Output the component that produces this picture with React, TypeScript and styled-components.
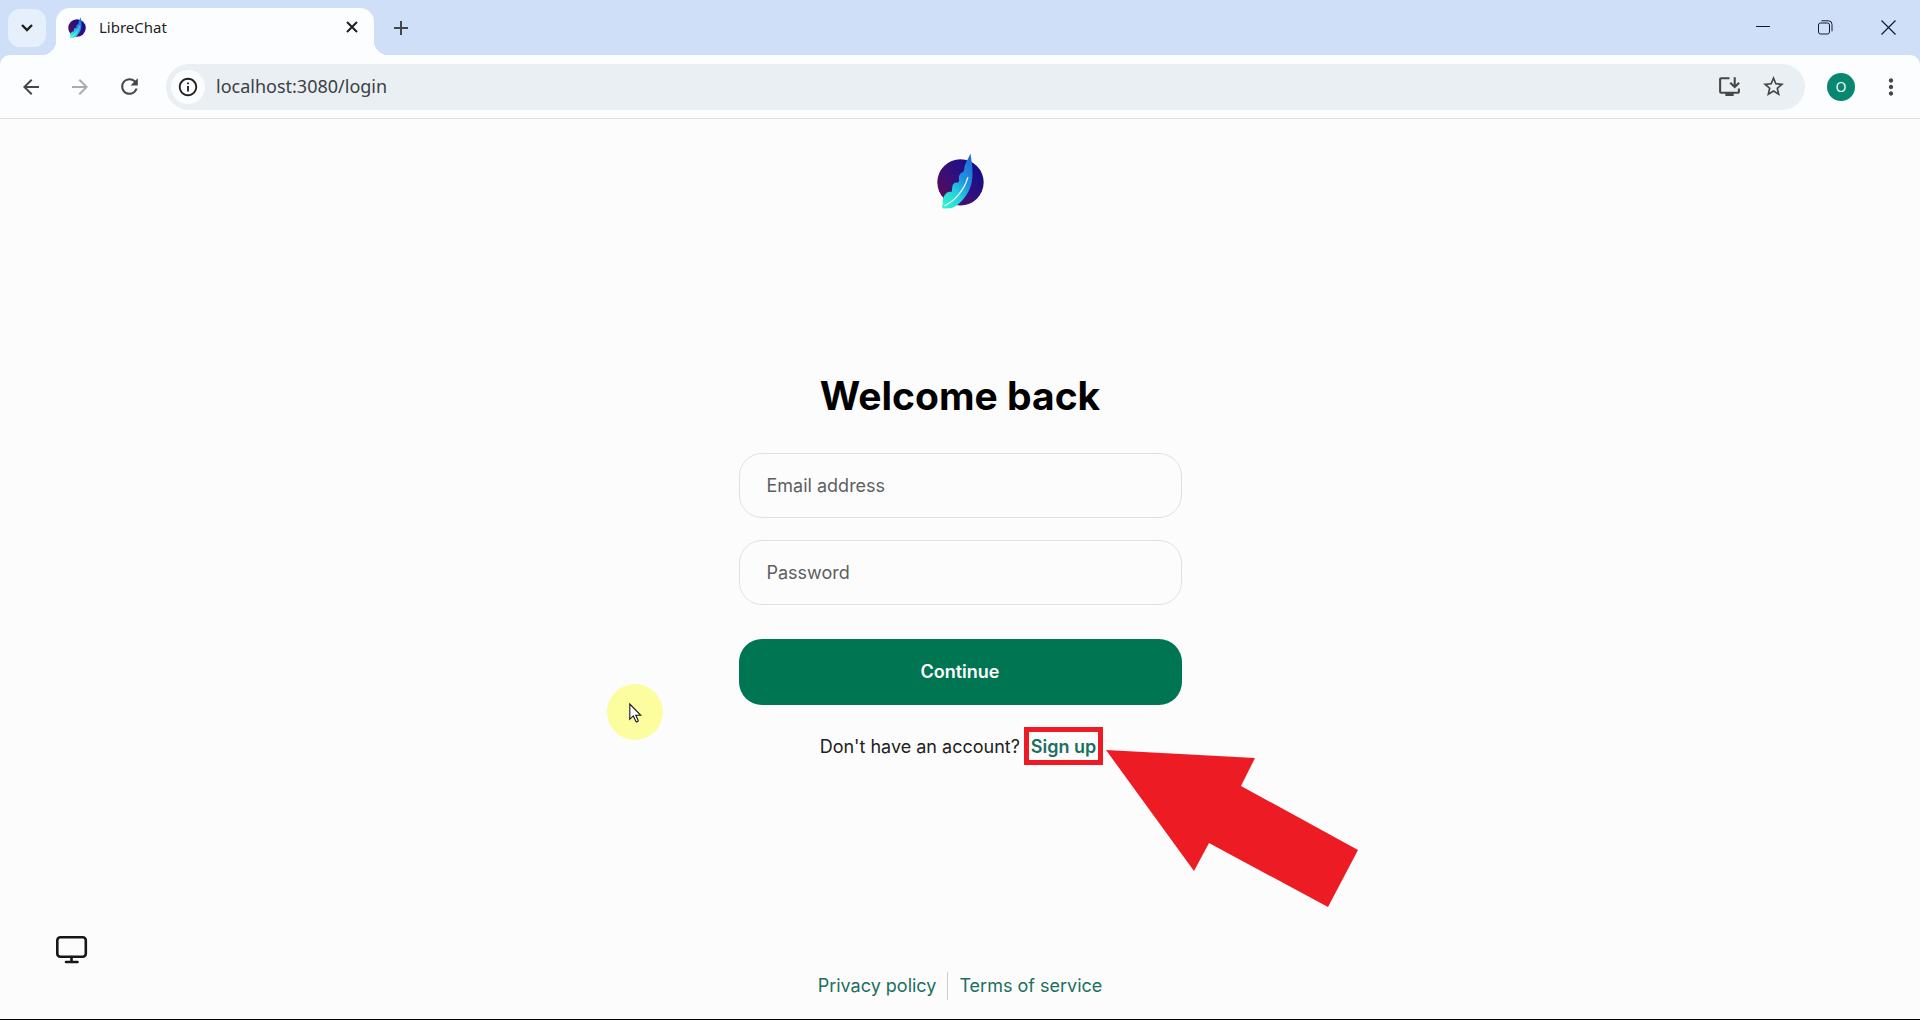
import React from "react";
import styled, { createGlobalStyle } from "styled-components";
import {
  MdAdd,
  MdArrowBack,
  MdArrowForward,
  MdInfoOutline,
  MdInstallDesktop,
  MdMoreVert,
  MdRefresh,
  MdStarBorder,
} from "react-icons/md";

const GlobalStyle = createGlobalStyle`
  *, *::before, *::after { box-sizing: border-box; }
  body { margin: 0; background: #fcfcfc; font-family: Inter, sans-serif; }
  button { font: inherit; border: 0; padding: 0; background: none; color: inherit; cursor: pointer; }
  a { text-decoration: none; }
  svg { display: block; flex: none; }
`;

const Window = styled.div`
  display: flex;
  flex-direction: column;
  min-height: 100vh;
  border-bottom: 1px solid #000;
`;

const TabStrip = styled.header`
  display: flex;
  align-items: flex-end;
  height: 55px;
  padding-left: 8px;
  background: #d0dff8;
  color: #1f1f1f;
  font-family: "Noto Sans", "Open Sans", sans-serif;
`;

const IconButton = styled.button<{ $size: number; $tone?: string }>`
  display: flex;
  align-items: center;
  justify-content: center;
  flex: none;
  width: ${(p) => p.$size}px;
  height: ${(p) => p.$size}px;
  border-radius: 50%;
  color: ${(p) => p.$tone ?? "#474747"};
`;

const TabSearch = styled(IconButton)`
  align-self: center;
  border-radius: 12px;
  background: #e6effc;
`;

const Tab = styled.div`
  position: relative;
  display: flex;
  align-items: center;
  width: 318px;
  height: 47px;
  margin-left: 10px;
  padding: 0 12px 9px;
  gap: 13px;
  border-radius: 14px 14px 0 0;
  background: #fcfdfe;
  font-size: 15px;

  &::before,
  &::after {
    content: "";
    position: absolute;
    bottom: 0;
    width: 14px;
    height: 14px;
  }
  &::before {
    right: 100%;
    background: radial-gradient(circle at 0 0, transparent 14px, #fcfdfe 14px);
  }
  &::after {
    left: 100%;
    background: radial-gradient(circle at 100% 0, transparent 14px, #fcfdfe 14px);
  }
`;

const TabTitle = styled.span`
  flex: 1;
`;

const NewTab = styled(IconButton)`
  align-self: center;
  margin-left: 10px;
`;

const WindowControls = styled.div`
  display: flex;
  align-self: stretch;
  margin-left: auto;
`;

const WindowButton = styled.button`
  display: flex;
  align-items: center;
  justify-content: center;
  width: 63px;
  height: 54px;
  color: #14182c;
`;

const ToolbarBack = styled.div`
  background: #d0dff8;
`;

const Toolbar = styled.nav`
  display: flex;
  align-items: center;
  height: 64px;
  padding: 0 12px;
  border-bottom: 1px solid #dfe1e3;
  border-radius: 10px 10px 0 0;
  background: #fcfdfe;
`;

const NavButtons = styled.div`
  display: flex;
  gap: 11px;
  margin-right: 18px;
`;

const AddressBar = styled.div`
  display: flex;
  align-items: center;
  flex: 1;
  height: 46px;
  padding: 0 10px 0 5px;
  border-radius: 23px;
  background: #e9eff3;
`;

const SiteInfo = styled(IconButton)`
  background: #fcfdfe;
`;

const AddressInput = styled.input`
  flex: 1;
  min-width: 0;
  margin: 0 11px;
  padding: 0 0 2px;
  border: 0;
  outline: 0;
  background: none;
  color: #3c4043;
  font: 18px "Noto Sans", "Open Sans", sans-serif;
`;

const Avatar = styled.button`
  width: 28px;
  height: 28px;
  margin: 0 19px 0 22px;
  border-radius: 50%;
  background: #07876f;
  color: #fff;
  font: 14px/28px "Open Sans", sans-serif;
`;

const Page = styled.div`
  position: relative;
  display: flex;
  flex: 1;
  flex-direction: column;
  align-items: center;
`;

const Brand = styled.div`
  padding-top: 34px;
`;

const Main = styled.main`
  position: relative;
  width: 443px;
  max-width: 100%;
  margin: auto 0;
`;

const Title = styled.h1`
  margin: 0 0 33px;
  color: #000;
  font-size: 39px;
  font-weight: 700;
  line-height: 48px;
  text-align: center;
`;

const Form = styled.form`
  display: flex;
  flex-direction: column;
  gap: 22px;
`;

const Field = styled.div`
  position: relative;
`;

const FieldInput = styled.input`
  display: block;
  width: 100%;
  height: 65px;
  padding: 0 27px;
  border: 1px solid #dfe1e1;
  border-radius: 23px;
  outline: 0;
  background: transparent;
  font: 18px Inter, sans-serif;
`;

const FieldLabel = styled.label`
  position: absolute;
  inset: 0 auto 0 28px;
  color: #5c5f5f;
  font-size: 18px;
  line-height: 65px;
  pointer-events: none;

  ${FieldInput}:focus + &,
  ${FieldInput}:not(:placeholder-shown) + & {
    font-size: 14px;
    line-height: 24px;
  }
`;

const Submit = styled.button`
  height: 66px;
  margin-top: 12px;
  border-radius: 23px;
  background: #007552;
  color: #fff;
  font-size: 18px;
  font-weight: 600;
`;

const SignupLine = styled.p`
  display: flex;
  justify-content: center;
  gap: 11px;
  margin: 30px 0 0;
  padding-right: 4px;
  color: #212121;
  font-size: 18px;
  font-weight: 400;
  line-height: 24px;
`;

const SignupLink = styled.a`
  position: relative;
  color: #1b6f5f;
  font-weight: 600;

  &::after {
    content: "";
    position: absolute;
    inset: -8px -7px -6px;
    border: 5px solid #ed1c24;
  }
`;

const Arrow = styled.svg`
  position: absolute;
  top: 15px;
  left: calc(100% + 10px);
`;

const Pointer = styled.div`
  position: absolute;
  right: calc(100% + 76px);
  bottom: 19px;
  width: 56px;
  height: 56px;
  padding: 19px 0 0 22px;
  border-radius: 50%;
  background: #fbfd9f;
`;

const ThemeButton = styled.button`
  position: absolute;
  bottom: 53px;
  left: 54px;
  color: #171717;
`;

const Footer = styled.footer`
  display: flex;
  padding: 51px 0 19px;
  line-height: 28px;
`;

const FooterLink = styled.a`
  padding: 0 11px;
  color: #1b6f5f;
  font-size: 18px;

  & + & {
    border-left: 1px solid #cdcfcf;
  }
`;

const Logo = ({ id, width, height }: { id: string; width: number; height: number }) => (
  <svg width={width} height={height} viewBox="50 38 142 168" aria-hidden="true">
    <defs>
      <linearGradient id={`${id}-disc`} x1="0.1" y1="0.9" x2="0.9" y2="0.2">
        <stop offset="0" stopColor="#5b0a5a" />
        <stop offset="0.5" stopColor="#34107a" />
        <stop offset="1" stopColor="#170d8a" />
      </linearGradient>
      <linearGradient id={`${id}-feather`} x1="0.1" y1="1" x2="0.8" y2="0">
        <stop offset="0" stopColor="#2ff5d0" />
        <stop offset="0.35" stopColor="#25cfdc" />
        <stop offset="0.65" stopColor="#1e90e4" />
        <stop offset="1" stopColor="#1f6fd0" />
      </linearGradient>
    </defs>
    <circle cx="121" cy="126" r="70" fill={`url(#${id}-disc)`} />
    <path
      fill={`url(#${id}-feather)`}
      d="M151 39C145 56 132 70 132 88L129 95C119 97 114 108 117 121L113 127C103 125 96 131 96 143L94 155C85 152 76 157 71 168C67 178 65 184 69 190C65 195 65 200 67 205L92 204C116 196 127 180 139 164C152 146 159 118 157 91C157 72 153 54 151 39Z"
    />
    <path
      fill="none"
      stroke="#eafcff"
      strokeWidth="4"
      strokeLinecap="round"
      d="M74 196C101 184 132 151 143 112"
    />
  </svg>
);

export default function App() {
  return (
    <Window>
      <GlobalStyle />
      <TabStrip>
        <TabSearch $size={38} $tone="#1f1f1f" aria-label="Search tabs">
          <svg width="12" height="8" viewBox="0 0 12 8" fill="none" stroke="currentColor" strokeWidth="2.4">
            <path d="M1 1l5 5 5-5" />
          </svg>
        </TabSearch>
        <Tab>
          <Logo id="tab" width={18} height={21} />
          <TabTitle>LibreChat</TabTitle>
          <IconButton $size={20} $tone="#1f1f1f" aria-label="Close tab">
            <svg width="12" height="12" viewBox="0 0 12 12" stroke="currentColor" strokeWidth="2">
              <path d="M1 1l10 10M11 1L1 11" />
            </svg>
          </IconButton>
        </Tab>
        <NewTab $size={34} aria-label="New tab">
          <MdAdd size={24} />
        </NewTab>
        <WindowControls>
          <WindowButton aria-label="Minimize">
            <svg width="14" height="14" viewBox="0 0 14 14" stroke="currentColor">
              <path d="M0 6.5h14" />
            </svg>
          </WindowButton>
          <WindowButton aria-label="Restore">
            <svg width="15" height="15" viewBox="0 0 15 15" fill="none" stroke="currentColor">
              <rect x="0.5" y="3" width="11" height="11" rx="2" />
              <path d="M3.5 0.8h7a3.5 3.5 0 0 1 3.5 3.5v7" />
            </svg>
          </WindowButton>
          <WindowButton aria-label="Close">
            <svg width="15" height="15" viewBox="0 0 15 15" stroke="currentColor" strokeWidth="1.2">
              <path d="M0.5 0.5l14 14M14.5 0.5l-14 14" />
            </svg>
          </WindowButton>
        </WindowControls>
      </TabStrip>

      <ToolbarBack>
        <Toolbar>
          <NavButtons>
            <IconButton $size={38} aria-label="Back">
              <MdArrowBack size={24} />
            </IconButton>
            <IconButton $size={38} $tone="#a9abac" aria-label="Forward">
              <MdArrowForward size={24} />
            </IconButton>
            <IconButton $size={38} aria-label="Reload">
              <MdRefresh size={25} />
            </IconButton>
          </NavButtons>
          <AddressBar>
            <SiteInfo $size={34} $tone="#1f1f1f" aria-label="Site information">
              <MdInfoOutline size={22} />
            </SiteInfo>
            <AddressInput aria-label="Address" defaultValue="localhost:3080/login" />
            <IconButton $size={44} aria-label="Install app">
              <MdInstallDesktop size={25} />
            </IconButton>
            <IconButton $size={44} aria-label="Bookmark this page">
              <MdStarBorder size={25} />
            </IconButton>
          </AddressBar>
          <Avatar aria-label="Profile">O</Avatar>
          <IconButton $size={34} aria-label="Menu">
            <MdMoreVert size={26} />
          </IconButton>
        </Toolbar>
      </ToolbarBack>

      <Page>
        <Brand>
          <Logo id="brand" width={47} height={56} />
        </Brand>
        <Main>
          <Title>Welcome back</Title>
          <Form>
            <Field>
              <FieldInput id="email" type="email" placeholder=" " />
              <FieldLabel htmlFor="email">Email address</FieldLabel>
            </Field>
            <Field>
              <FieldInput id="password" type="password" placeholder=" " />
              <FieldLabel htmlFor="password">Password</FieldLabel>
            </Field>
            <Submit type="button">Continue</Submit>
          </Form>
          <SignupLine>
            Don't have an account?
            <SignupLink href="#signup">
              Sign up
              <Arrow width="252" height="157" viewBox="0 0 252 157" fill="#ed1c24" aria-hidden="true">
                <path d="M0 0L149 8L135 36L252 100L222 157L103 93L88 121Z" />
              </Arrow>
            </SignupLink>
          </SignupLine>
          <Pointer>
            <svg width="13" height="20" viewBox="0 0 13 20" fill="#fff" stroke="#15151f" strokeWidth="1.1">
              <path d="M0.8 1v15.3l3.5-3.4 2.6 5.6c.5.8 2.6-.1 2.3-1.1L6.8 12.3h5z" />
            </svg>
          </Pointer>
        </Main>
        <Footer>
          <FooterLink href="#privacy">Privacy policy</FooterLink>
          <FooterLink href="#terms">Terms of service</FooterLink>
        </Footer>
        <ThemeButton aria-label="Theme">
          <svg width="34" height="32" viewBox="0 0 34 32" fill="none" stroke="currentColor" strokeWidth="2.6" strokeLinecap="round">
            <rect x="3.3" y="3.3" width="28.5" height="19.5" rx="3" />
            <path d="M17.5 23v5M12 28h11.5" />
          </svg>
        </ThemeButton>
      </Page>
    </Window>
  );
}
